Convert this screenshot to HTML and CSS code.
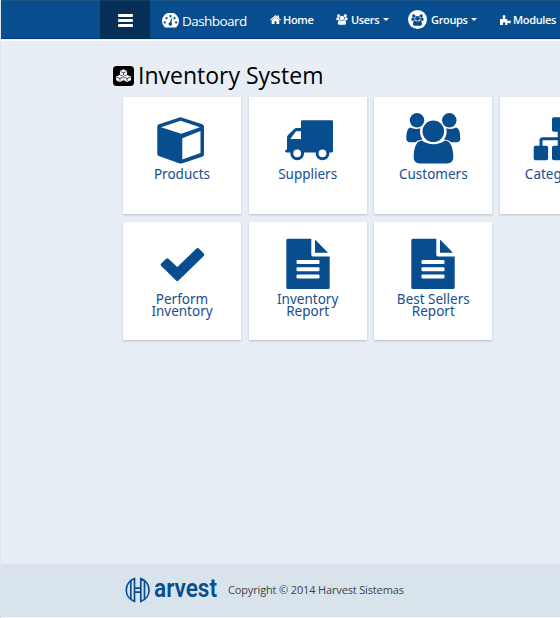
FILE: index.html
```html
<!DOCTYPE html>
<html lang="en">
<head>
<meta charset="utf-8">
<title>Inventory System</title>
<link rel="stylesheet" href="styles.css">
</head>
<body>
<svg class="defs" aria-hidden="true">
  <defs>
    <symbol id="group" viewBox="32 15 55 53">
      <circle cx="43" cy="23.3" r="7.2"/><circle cx="75.3" cy="23.3" r="7.2"/>
      <path d="M36.5 30.5C33 31 32.3 37 32.3 41.5C32.3 44 34 45.3 36 45.3H41.5C43 43.5 45 43 48.5 42.5C46 39 45.500 35 46.300 31.200C43 32.400 39 32 36.500 30.500Z"/>
      <path d="M82.100 30.500C85.600 31 86.300 37 86.300 41.500C86.300 44 84.600 45.300 82.600 45.300H77.100C75.600 43.500 73.600 43 70.100 42.500C72.600 39 73.100 35 72.300 31.200C75.600 32.400 79.600 32 82.100 30.500Z"/>
      <circle cx="59.300" cy="34.300" r="10.800"/>
      <path d="M48 43.500C55 48.500 64 48.500 71 43.500C77.500 43.500 79.300 53 79.300 60C79.300 64 77 66.400 73 66.400H46C42 66.400 39.700 64 39.700 60C39.700 53 41.500 43.500 48 43.500Z"/>
    </symbol>
    <symbol id="file" viewBox="0 0 118 74">
      <path d="M39 16.700H62.300V32.800Q62.300 34.400 64 34.400H80.700V65.400Q80.700 67 79 67H39Q37.300 67 37.300 65.400V18.300Q37.300 16.700 39 16.700Z"/>
      <path d="M66 17.500L79 30.700H66Z"/>
      <g class="paper"><rect x="47.500" y="38" width="23" height="4" rx="1"/><rect x="47.500" y="45.200" width="23" height="4" rx="1"/><rect x="47.500" y="52.400" width="23" height="4" rx="1"/></g>
    </symbol>
  </defs>
</svg>

<header class="topbar">
  <button class="toggle" aria-label="Menu"><i></i><i></i><i></i></button>
  <a class="brand">
    <svg width="17" height="15" viewBox="0 0 18 15"><path d="M2.500 14.300A9 9 0 1 1 15.500 14.300Q15.100 14.800 14.500 14.800H3.500Q2.900 14.800 2.500 14.300Z"/><g class="cut"><circle cx="3" cy="9.500" r="1.200"/><circle cx="4.800" cy="5" r="1.200"/><circle cx="9" cy="3" r="1.200"/><circle cx="13.200" cy="5" r="1.200"/><circle cx="15" cy="9.500" r="1.200"/><circle cx="8.800" cy="11.200" r="1.900"/><path d="M8.300 10L9.800 5.300L10.700 5.500L9.800 11Z"/></g></svg>
    <span>Dashboard</span>
  </a>
  <a class="link home">
    <svg width="11" height="9" viewBox="0 0 11 9"><path d="M5.500 0L7.500 1.700V.6H9V3L11 4.800L10.300 5.600L5.500 1.600L.7 5.600L0 4.800ZM5.500 1.800L9.300 5.200V9H6.500V6.200H4.500V9H1.700V5.200Z"/></svg>
    <span>Home</span>
  </a>
  <a class="link users">
    <svg width="12" height="11"><use href="#group"/></svg>
    <span>Users</span><b class="caret"></b>
  </a>
  <a class="link groups">
    <span class="badge"><svg width="13" height="12"><use href="#group"/></svg></span>
    <span>Groups</span><b class="caret"></b>
  </a>
  <a class="link modules">
    <svg width="11" height="10" viewBox="0 0 11 10"><path d="M0 4H3.200C2.400 2.800 2.200 0 4 0C5.800 0 5.600 2.800 4.900 4H7.300V6.200C8.600 5.300 11 5.200 11 7C11 8.800 8.600 8.500 7.300 7.700V10H5C5.700 8 5.300 7.200 4.200 7.200C3 7.200 2.600 8.400 3.200 10H0Z"/></svg>
    <span>Modules</span>
  </a>
</header>

<main>
  <h1>
    <svg width="21" height="20" viewBox="0 0 20 20" preserveAspectRatio="none"><rect width="20" height="20" rx="3.500"/><g class="cubes"><path d="M10 3.300L13.400 4.900V8.400L10 9.900L6.600 8.400V4.900ZM6.500 9L9.900 10.500V14.300L6.500 15.900L3 14.300V10.500ZM13.500 9L17 10.500V14.300L13.500 15.900L10.100 14.300V10.500Z"/><path class="cube-edge" d="M7.300 5.600L10 6.800L12.700 5.600M10 6.800V9M3.800 11.300L6.600 12.500L9.400 11.300M6.600 12.500V15M10.700 11.300L13.400 12.500L16.200 11.300M13.400 12.500V15"/></g></svg>
    <span>Inventory System</span>
  </h1>
  <section class="grid">
    <a class="card">
      <svg viewBox="0 0 118 74"><path d="M57.700 20.300L79.300 27.300Q81 28 81 29.500V57.500Q81 58.700 79.800 59.400L59.500 66.200Q57.700 67 56 66.200L35.700 59Q34.300 58.300 34.300 57V29.300Q34.300 28 36 27.300L56.500 20.500Q57.700 20 58.900 20.500Z"/><path class="paper" d="M57.700 23.700L38 30.200L58.300 36.800L77 30.200ZM59.300 41.200L77.500 34V56L59.300 62.500Z"/></svg>
      <span>Products</span>
    </a>
    <a class="card">
      <svg viewBox="0 0 118 74"><path d="M53.500 23.300H82.700Q84 23.300 84 24.600V54Q84 55.400 82.700 55.400H37.500Q36 55.400 36 54Q36 52.800 38 52.500V40.500Q38 39 39 38L45.200 32Q46.200 31 47.500 31H52V24.600Q52 23.300 53.500 23.300Z"/><path class="paper" d="M41.300 42L47 34.300H52V42Z"/><g class="wheel"><circle cx="48.200" cy="56.300" r="5.400"/><circle cx="73.500" cy="56.300" r="5.400"/></g></svg>
      <span>Suppliers</span>
    </a>
    <a class="card">
      <svg viewBox="0 0 118 74"><use href="#group" x="32" y="15" width="55" height="53"/></svg>
      <span>Customers</span>
    </a>
    <a class="card">
      <svg viewBox="0 0 118 74"><rect x="52" y="20.300" width="14.400" height="14.400" rx="1.700"/><rect x="33.700" y="48.700" width="14.400" height="14.600" rx="1.700"/><rect x="52" y="48.700" width="14.400" height="14.600" rx="1.700"/><rect x="70.300" y="48.700" width="14.400" height="14.600" rx="1.700"/><path class="wire" d="M59.200 33V50M41 50V43.500Q41 41.700 43 41.700H75.500Q77.500 41.700 77.500 43.500V50"/></svg>
      <span>Categories</span>
    </a>
    <a class="card">
      <svg viewBox="0 0 118 74"><path class="check" d="M44.300 38L54.300 47.500L74.700 27.800L79.500 32.700L54.300 57.300L39.500 42.700Z"/></svg>
      <span>Perform<br>Inventory</span>
    </a>
    <a class="card">
      <svg viewBox="0 0 118 74"><use href="#file"/></svg>
      <span>Inventory<br>Report</span>
    </a>
    <a class="card">
      <svg viewBox="0 0 118 74"><use href="#file"/></svg>
      <span>Best Sellers<br>Report</span>
    </a>
  </section>
</main>

<footer>
  <svg class="logo" width="94" height="28" viewBox="0 0 94 28">
    <path class="mark" d="M10.500 2.600A12 12 0 0 0 10.500 25.400ZM16.800 2.600A12 12 0 0 1 16.800 25.400ZM6.800 5V23M20.500 5V23M10.500 12.200H16.800M10.500 16.200H16.800"/>
    <text x="30" y="21" textLength="63" lengthAdjust="spacingAndGlyphs">arvest</text>
  </svg>
  <span>Copyright © 2014 Harvest Sistemas</span>
</footer>
</body>
</html>
```
FILE: styles.css
```css
* { box-sizing: border-box; }
html, body { margin: 0; height: 100%; overflow: hidden; }
body {
  display: flex;
  flex-direction: column;
  background: #e7eef5;
  font-family: "Open Sans", "Noto Sans", sans-serif;
  border-left: 1px solid #dde6ee;
}
.defs { position: absolute; width: 0; height: 0; }
svg { display: block; flex: none; }

.topbar {
  display: flex;
  align-items: center;
  flex: none;
  height: 41px;
  margin-left: -1px;
  padding: 0 0 2px 100px;
  background: linear-gradient(#1b5687 1px, #084d8e 1px, #084d8e 38px, #033a80 38px, #033a80 39px, #d5e2ee 39px, #fff 40px);
  color: #fff;
  fill: #fff;
  white-space: nowrap;
}
.topbar a { display: flex; align-items: center; flex: none; }
.toggle {
  display: flex;
  flex-direction: column;
  align-items: center;
  justify-content: center;
  gap: 2px;
  flex: none;
  width: 50px;
  height: 39px;
  padding: 0 0 0 1px;
  border: 0;
  border-top: 1px solid #143e64;
  background: #052f57;
}
.toggle i { width: 15px; height: 3px; background: #fff; border-radius: 1px; }
.topbar .brand {
  width: 120px;
  height: 39px;
  padding: 2px 0 0 12px;
  gap: 3px;
  font-size: 13.500px;
  letter-spacing: -.55px;
}
.cut { fill: #084d8e; }
.link { font-size: 11px; font-weight: 600; height: 39px; gap: 2px; letter-spacing: -.35px; }
.home { width: 66px; }
.users { width: 72px; gap: 3px; }
.groups { width: 92px; gap: 4px; }
.modules { gap: 2px; }
.badge {
  display: flex;
  align-items: center;
  justify-content: center;
  width: 19px;
  height: 19px;
  border-radius: 50%;
  background: #fff;
  fill: #084d8e;
}
.caret { border: 3px solid transparent; border-top-color: #fff; border-bottom: 0; margin-left: 1px; }
.groups .caret { margin-left: -1px; }

main { flex: 1; padding: 21px 0 0 112px; }
h1 {
  display: flex;
  align-items: center;
  gap: 4px;
  height: 28px;
  margin: 0;
  font-size: 23px;
  font-weight: 400;
  color: #000;
  white-space: nowrap;
}
h1 span { line-height: 26px; padding-bottom: 2px; }
.cubes { fill: #fff; }
.cube-edge { fill: none; stroke: #000; stroke-width: .7; }
.grid {
  display: grid;
  grid-template-columns: repeat(4, 118px);
  gap: 7.670px;
  margin: 6.500px 0 0 10px;
}
.card {
  height: 117.700px;
  background: #fff;
  box-shadow: 0 1px 2px rgba(30, 50, 70, .25);
  text-align: center;
  color: #184e8c;
  fill: #084d8e;
  font-family: "Noto Sans", sans-serif;
  font-size: 13.500px;
  line-height: 12.600px;
}
.card > svg { width: 118px; height: 74px; margin-bottom: -3px; }
.card > span { display: block; }
.paper { fill: #fff; }
.wheel { fill: #fff; stroke: #084d8e; stroke-width: 3; }
.wire { fill: none; stroke: #084d8e; stroke-width: 3; }
.check { stroke: #084d8e; stroke-width: 3.500; stroke-linejoin: round; }

footer {
  display: flex;
  align-items: center;
  flex: none;
  height: 54px;
  padding: 0 0 2px 123px;
  gap: 10px;
  background: linear-gradient(#d8e3ec 53px, #f2f6fa 53px);
  color: #444;
  font-size: 11px;
  letter-spacing: -.15px;
}
footer span { padding-bottom: 2px; }
.mark { fill: none; stroke: #084d8e; stroke-width: 1.700; }
.logo text { font: 600 25px Roboto, sans-serif; letter-spacing: 0; fill: #084d8e; }
```
